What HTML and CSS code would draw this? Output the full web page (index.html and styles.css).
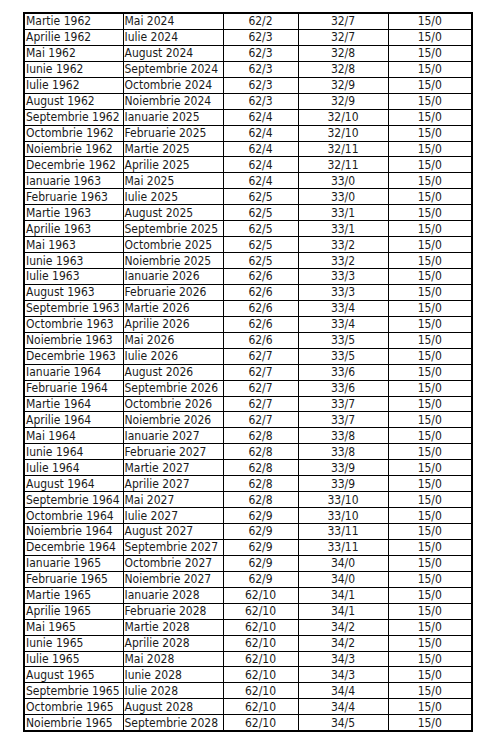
FILE: index.html
```html
<!DOCTYPE html>
<html>
<head>
<meta charset="utf-8">
<link rel="stylesheet" href="styles.css">
</head>
<body>
<table class="grid">
<colgroup><col class="c1"><col class="c2"><col class="c3"><col class="c4"><col class="c5"></colgroup>
<tbody>
<tr><td>Martie 1962</td><td>Mai 2024</td><td>62/2</td><td>32/7</td><td>15/0</td></tr>
<tr><td>Aprilie 1962</td><td>Iulie 2024</td><td>62/3</td><td>32/7</td><td>15/0</td></tr>
<tr><td>Mai 1962</td><td>August 2024</td><td>62/3</td><td>32/8</td><td>15/0</td></tr>
<tr><td>Iunie 1962</td><td>Septembrie 2024</td><td>62/3</td><td>32/8</td><td>15/0</td></tr>
<tr><td>Iulie 1962</td><td>Octombrie 2024</td><td>62/3</td><td>32/9</td><td>15/0</td></tr>
<tr><td>August 1962</td><td>Noiembrie 2024</td><td>62/3</td><td>32/9</td><td>15/0</td></tr>
<tr><td>Septembrie 1962</td><td>Ianuarie 2025</td><td>62/4</td><td>32/10</td><td>15/0</td></tr>
<tr><td>Octombrie 1962</td><td>Februarie 2025</td><td>62/4</td><td>32/10</td><td>15/0</td></tr>
<tr><td>Noiembrie 1962</td><td>Martie 2025</td><td>62/4</td><td>32/11</td><td>15/0</td></tr>
<tr><td>Decembrie 1962</td><td>Aprilie 2025</td><td>62/4</td><td>32/11</td><td>15/0</td></tr>
<tr><td>Ianuarie 1963</td><td>Mai 2025</td><td>62/4</td><td>33/0</td><td>15/0</td></tr>
<tr><td>Februarie 1963</td><td>Iulie 2025</td><td>62/5</td><td>33/0</td><td>15/0</td></tr>
<tr><td>Martie 1963</td><td>August 2025</td><td>62/5</td><td>33/1</td><td>15/0</td></tr>
<tr><td>Aprilie 1963</td><td>Septembrie 2025</td><td>62/5</td><td>33/1</td><td>15/0</td></tr>
<tr><td>Mai 1963</td><td>Octombrie 2025</td><td>62/5</td><td>33/2</td><td>15/0</td></tr>
<tr><td>Iunie 1963</td><td>Noiembrie 2025</td><td>62/5</td><td>33/2</td><td>15/0</td></tr>
<tr><td>Iulie 1963</td><td>Ianuarie 2026</td><td>62/6</td><td>33/3</td><td>15/0</td></tr>
<tr><td>August 1963</td><td>Februarie 2026</td><td>62/6</td><td>33/3</td><td>15/0</td></tr>
<tr><td>Septembrie 1963</td><td>Martie 2026</td><td>62/6</td><td>33/4</td><td>15/0</td></tr>
<tr><td>Octombrie 1963</td><td>Aprilie 2026</td><td>62/6</td><td>33/4</td><td>15/0</td></tr>
<tr><td>Noiembrie 1963</td><td>Mai 2026</td><td>62/6</td><td>33/5</td><td>15/0</td></tr>
<tr><td>Decembrie 1963</td><td>Iulie 2026</td><td>62/7</td><td>33/5</td><td>15/0</td></tr>
<tr><td>Ianuarie 1964</td><td>August 2026</td><td>62/7</td><td>33/6</td><td>15/0</td></tr>
<tr><td>Februarie 1964</td><td>Septembrie 2026</td><td>62/7</td><td>33/6</td><td>15/0</td></tr>
<tr><td>Martie 1964</td><td>Octombrie 2026</td><td>62/7</td><td>33/7</td><td>15/0</td></tr>
<tr><td>Aprilie 1964</td><td>Noiembrie 2026</td><td>62/7</td><td>33/7</td><td>15/0</td></tr>
<tr><td>Mai 1964</td><td>Ianuarie 2027</td><td>62/8</td><td>33/8</td><td>15/0</td></tr>
<tr><td>Iunie 1964</td><td>Februarie 2027</td><td>62/8</td><td>33/8</td><td>15/0</td></tr>
<tr><td>Iulie 1964</td><td>Martie 2027</td><td>62/8</td><td>33/9</td><td>15/0</td></tr>
<tr><td>August 1964</td><td>Aprilie 2027</td><td>62/8</td><td>33/9</td><td>15/0</td></tr>
<tr><td>Septembrie 1964</td><td>Mai 2027</td><td>62/8</td><td>33/10</td><td>15/0</td></tr>
<tr><td>Octombrie 1964</td><td>Iulie 2027</td><td>62/9</td><td>33/10</td><td>15/0</td></tr>
<tr><td>Noiembrie 1964</td><td>August 2027</td><td>62/9</td><td>33/11</td><td>15/0</td></tr>
<tr><td>Decembrie 1964</td><td>Septembrie 2027</td><td>62/9</td><td>33/11</td><td>15/0</td></tr>
<tr><td>Ianuarie 1965</td><td>Octombrie 2027</td><td>62/9</td><td>34/0</td><td>15/0</td></tr>
<tr><td>Februarie 1965</td><td>Noiembrie 2027</td><td>62/9</td><td>34/0</td><td>15/0</td></tr>
<tr><td>Martie 1965</td><td>Ianuarie 2028</td><td>62/10</td><td>34/1</td><td>15/0</td></tr>
<tr><td>Aprilie 1965</td><td>Februarie 2028</td><td>62/10</td><td>34/1</td><td>15/0</td></tr>
<tr><td>Mai 1965</td><td>Martie 2028</td><td>62/10</td><td>34/2</td><td>15/0</td></tr>
<tr><td>Iunie 1965</td><td>Aprilie 2028</td><td>62/10</td><td>34/2</td><td>15/0</td></tr>
<tr><td>Iulie 1965</td><td>Mai 2028</td><td>62/10</td><td>34/3</td><td>15/0</td></tr>
<tr><td>August 1965</td><td>Iunie 2028</td><td>62/10</td><td>34/3</td><td>15/0</td></tr>
<tr><td>Septembrie 1965</td><td>Iulie 2028</td><td>62/10</td><td>34/4</td><td>15/0</td></tr>
<tr><td>Octombrie 1965</td><td>August 2028</td><td>62/10</td><td>34/4</td><td>15/0</td></tr>
<tr><td>Noiembrie 1965</td><td>Septembrie 2028</td><td>62/10</td><td>34/5</td><td>15/0</td></tr>
</tbody>
</table>
</body>
</html>
```
FILE: styles.css
```css
html, body {
  margin: 0;
  padding: 0;
  background: #fff;
}
body {
  padding: 12px 0 0 23px;
  font-family: "DejaVu Sans Condensed", "DejaVu Sans", sans-serif;
  font-size: 12px;
  color: #1a1a1a;
}
.grid {
  border-collapse: collapse;
  table-layout: fixed;
  width: 450px;
  border: 2px solid #000;
}
.c1 { width: 99px; }
.c2 { width: 100px; }
.c3 { width: 75px; }
.c4 { width: 90px; }
.c5 { width: 84px; }
.grid td {
  border: 1px solid #000;
  padding: 0 0 0 1px;
  height: 14.95px;
  line-height: 14px;
  white-space: nowrap;
  overflow: hidden;
}
.grid td:nth-child(n+3) {
  text-align: center;
  padding: 0;
}
```
